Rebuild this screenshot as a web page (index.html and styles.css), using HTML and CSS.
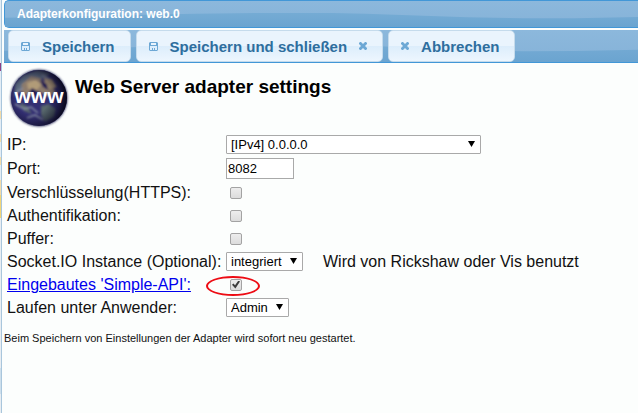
FILE: index.html
```html
<!DOCTYPE html>
<html lang="de">
<head>
<meta charset="utf-8">
<title>Adapterkonfiguration: web.0</title>
<link rel="stylesheet" href="styles.css">
</head>
<body>
<svg class="symbols" aria-hidden="true">
  <symbol id="disk" viewBox="0 0 9 9"><path fill="currentColor" fill-rule="evenodd" d="M1 0h7l1 1v7l-1 1H1L0 8V1zM2 1v2h5V1zM1 4v4h2V6h1v2h1V6h1v2h2V4z"/></symbol>
  <symbol id="close" viewBox="0 0 8 8"><path fill="currentColor" d="M1 0h1l2 2 2-2h1l1 1v1L6 4l2 2v1L7 8H6L4 6 2 8H1L0 7V6l2-2-2-2V1z"/></symbol>
</svg>
<div class="page-edge"></div>
<main class="dialog">
  <header class="titlebar bar">Adapterkonfiguration: web.0</header>
  <div class="toolbar bar">
    <button type="button" class="btn"><svg class="disk"><use href="#disk"/></svg><span>Speichern</span></button>
    <button type="button" class="btn"><svg class="disk"><use href="#disk"/></svg><span>Speichern und schließen</span><svg class="close"><use href="#close"/></svg></button>
    <button type="button" class="btn"><svg class="close"><use href="#close"/></svg><span>Abbrechen</span></button>
  </div>
  <div class="heading">
    <svg class="globe" viewBox="0 0 64 64" role="img" aria-label="www">
      <defs>
        <radialGradient id="shade" cx=".38" cy=".5" r=".64"><stop offset=".45" stop-color="#080824" stop-opacity="0"/><stop offset=".78" stop-color="#070718" stop-opacity=".6"/><stop offset="1" stop-color="#000008"/></radialGradient>
        <clipPath id="disc"><circle cx="32" cy="32" r="28"/></clipPath>
        <filter id="soft"><feGaussianBlur stdDeviation="1"/></filter>
      </defs>
      <circle cx="32" cy="32" r="28.500" fill="#33355f" filter="url(#soft)"/>
      <g clip-path="url(#disc)">
        <path fill="#332f72" d="M0 0h64v64H0z"/>
        <g filter="url(#soft)">
          <path fill="#5d6c80" d="M8 18 16 9l15-5 13 3-8 6-13 1-8 10-8 7z"/>
          <path fill="#8d7b6c" d="M15 18 24 10l9 2 4 5 8 1 4 9-8 4-8-5-10 5-9-5z"/>
          <path fill="#b19b78" d="m20 17 9-3 5 5-4 5-9-1zM37 12l8 1 5 8-7 2-5-4z"/>
          <path fill="#59676c" d="m34 40 8-2 7 5-2 8-9 5-4-7zM12 36l8 4 5 8-8-3z"/>
          <path fill="none" stroke="#8991a5" stroke-width="1.500" d="m8 38 9 5 7-2 7 6M20 52l8-3 8 5M9 27l7-5M35 9l8 4"/>
          <path fill="#201a52" d="m25 22 7 4-3 4-7-3zM33 14l3 7 5 3-1-6z"/>
        </g>
        <circle cx="32" cy="32" r="29" fill="url(#shade)"/>
      </g>
      <text class="globe-text" x="32" y="37" text-anchor="middle">www</text>
    </svg>
    <h1>Web Server adapter settings</h1>
  </div>
  <form>
    <div class="row"><label for="ip">IP:</label><span class="select wide"><select id="ip"><option>[IPv4] 0.0.0.0</option></select></span></div>
    <div class="row port"><label for="port">Port:</label><input type="text" id="port" value="8082"></div>
    <div class="row"><label for="secure">Verschlüsselung(HTTPS):</label><input type="checkbox" id="secure"></div>
    <div class="row"><label for="auth">Authentifikation:</label><input type="checkbox" id="auth"></div>
    <div class="row"><label for="cache">Puffer:</label><input type="checkbox" id="cache"></div>
    <div class="row"><label for="socket">Socket.IO Instance (Optional):</label><span class="select"><select id="socket"><option>integriert</option></select></span><span class="hint">Wird von Rickshaw oder Vis benutzt</span></div>
    <div class="row"><a href="#api" id="api-label">Eingebautes 'Simple-API':</a><span class="marked"><input type="checkbox" id="api" aria-labelledby="api-label" checked></span></div>
    <div class="row"><label for="user">Laufen unter Anwender:</label><span class="select"><select id="user"><option>Admin</option></select></span></div>
  </form>
  <p class="note">Beim Speichern von Einstellungen der Adapter wird sofort neu gestartet.</p>
</main>
</body>
</html>
```
FILE: styles.css
```css
*, ::before, ::after { box-sizing: border-box; }
body {
  margin: 0;
  min-height: 100vh;
  display: flex;
  overflow: hidden;
  background: #fcfefd;
  color: #111;
  font-family: "Liberation Sans", Arial, sans-serif;
  font-size: 16px;
}
.symbols { position: absolute; width: 0; height: 0; }
.page-edge {
  flex: none;
  width: 2px;
  border-right: 1px solid #a9c6dc;
  background: linear-gradient(#e3edf5 63px, #8c3f85 63px 71px, #e3edf5 71px 111px, #f3dca9 111px 119px, #e3edf5 119px 134px, #f3dca9 134px 142px, #e3edf5 142px 157px, #f3dca9 157px 165px, #e3edf5 165px 180px, #f3dca9 180px 195px, #f2d677 195px 218px, #e8edf2 218px 368px, #cddfec 368px 394px, #e8edf2 394px);
}
.dialog { flex: 1; min-width: 0; padding-left: 2px; }
.bar {
  position: relative;
  z-index: 0;
  overflow: hidden;
  background: linear-gradient(#8cb8dc, #85b2d8);
  border: 1px solid #4297d7;
  border-right: 0;
}
.bar::before {
  content: "";
  position: absolute;
  z-index: -1;
  inset: 45% 0 0;
  background: linear-gradient(#75abd4, #6ba4d0);
  clip-path: polygon(0 36%, 10% 28%, 20% 16%, 30% 7%, 40% 2%, 50% 1%, 57% 7%, 65% 20%, 73% 32%, 82% 39%, 90% 38%, 100% 30%, 100% 100%, 0 100%);
}
.titlebar {
  height: 28px;
  padding-left: 12px;
  border-radius: 5px 0 0 5px;
  color: #fff;
  font-size: 12px;
  font-weight: bold;
  line-height: 26px;
}
.toolbar {
  display: flex;
  gap: 5px;
  height: 33px;
  margin-top: 2px;
  padding-left: 4px;
  border-width: 0 0 1px;
}
.btn {
  display: flex;
  align-items: center;
  gap: 12px;
  height: 32px;
  padding: 0 15px 0 12px;
  border: 1px solid #c5dbec;
  border-radius: 5px;
  background: linear-gradient(#eaf4fd 50%, #dcedfb 50%, #edf6fe);
  color: #2e6e9e;
  font: bold 15px "Liberation Sans", Arial, sans-serif;
  white-space: nowrap;
}
.btn svg { flex: none; color: #6da8d5; }
.disk { width: 9px; height: 9px; }
.close { width: 8px; height: 8px; }
.heading { display: flex; padding: 3px 0 0 3px; }
.globe { width: 64px; height: 64px; }
.globe-text { font: bold 21px "Liberation Sans", Arial, sans-serif; fill: #fff; }
h1 { margin: 10px 0 0 4px; color: #000; font-size: 19px; line-height: 22px; }
form { display: grid; gap: 2px; padding: 4px 0 0 3px; }
.row { display: grid; grid-template-columns: 217px auto 1fr; align-items: center; justify-items: start; gap: 2px; height: 21px; white-space: nowrap; }
.port { height: 23px; }
a { color: #00e; }
.select { position: relative; }
.select::after {
  content: "";
  position: absolute;
  top: 6px;
  right: 6px;
  width: 7px;
  height: 6px;
  background: #000;
  clip-path: polygon(0 0, 100% 0, 50% 100%);
  pointer-events: none;
}
select, input[type="text"] {
  display: block;
  margin: 0;
  border: 1px solid #a9a9a9;
  background: #fff;
  color: #000;
  font: 13px "Liberation Sans", Arial, sans-serif;
}
select { appearance: none; height: 19px; padding: 0 20px 0 4px; border-radius: 1px; }
.wide select { width: 255px; }
input[type="text"] { width: 68px; height: 21px; padding: 0 1px; }
input[type="checkbox"] {
  appearance: none;
  display: grid;
  place-items: center;
  width: 12px;
  height: 12px;
  margin: 0 0 0 4px;
  border: 1px solid #a3a3a3;
  border-radius: 2px;
  background: linear-gradient(#ededed, #dcdcdc);
}
input[type="checkbox"]:checked::after {
  content: "";
  width: 8px;
  height: 8px;
  background: #3c3c3c;
  clip-path: polygon(0 52%, 18% 38%, 38% 60%, 80% 0, 100% 14%, 42% 100%);
}
.hint { margin-left: 18px; }
.marked { position: relative; }
.marked::after {
  content: "";
  position: absolute;
  left: -20px;
  top: -3px;
  width: 54px;
  height: 20px;
  border: 2px solid #ed0c14;
  border-radius: 50%;
  pointer-events: none;
}
.note { margin: 13px 0 0; font-size: 11px; line-height: 14px; }
```
